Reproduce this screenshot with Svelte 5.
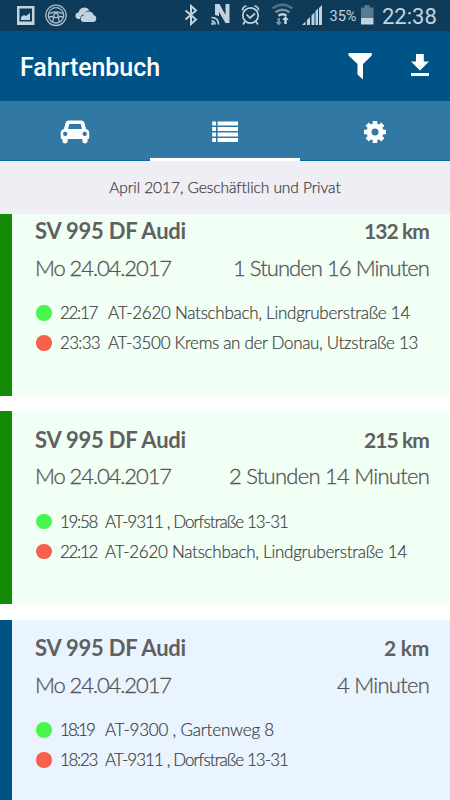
<script>
  const trips = [
    {
      kind: 'business', car: 'SV 995 DF Audi', carW: 151, km: '132 km', kmW: 65,
      date: 'Mo 24.04.2017', dateW: 136, time: '1 Stunden 16 Minuten', timeW: 196, column: 48,
      stops: [
        { at: '22:17', atW: 37, place: 'AT-2620 Natschbach, Lindgruberstraße 14', w: 302 },
        { at: '23:33', atW: 40, place: 'AT-3500 Krems an der Donau, Utzstraße 13', w: 310 }
      ]
    },
    {
      kind: 'business', car: 'SV 995 DF Audi', carW: 151, km: '215 km', kmW: 65,
      date: 'Mo 24.04.2017', dateW: 136, time: '2 Stunden 14 Minuten', timeW: 200, column: 45,
      stops: [
        { at: '19:58', atW: 37, place: 'AT-9311 , Dorfstraße 13-31', w: 183 },
        { at: '22:12', atW: 37, place: 'AT-2620 Natschbach, Lindgruberstraße 14', w: 302 }
      ]
    },
    {
      kind: 'private', car: 'SV 995 DF Audi', carW: 151, km: '2 km', kmW: 45,
      date: 'Mo 24.04.2017', dateW: 136, time: '4 Minuten', timeW: 92, column: 45,
      stops: [
        { at: '18:19', atW: 34, place: 'AT-9300 , Gartenweg 8', w: 169 },
        { at: '18:23', atW: 37, place: 'AT-9311 , Dorfstraße 13-31', w: 183 }
      ]
    }
  ];

  // Spreads the letter gaps evenly so that a label takes up the given width.
  function fit(node, width) {
    const gap = (width - node.getBoundingClientRect().width) / node.textContent.length;
    node.style.letterSpacing = `${gap}px`;
  }
</script>

<div class="screen">
  <header class="status">
    <svg width="450" height="31" viewBox="0 0 450 31" fill="#c3d3dd">
      <path fill-rule="evenodd" d="M17 6h17.500v19H17zM19.500 8.500v13h12.500v-13z" />
      <path d="M21 20v-3l3-2 2 1 4-3v7z" />
      <g fill="none" stroke="#a9bcc9" stroke-width="1.300">
        <circle cx="56" cy="15.300" r="10.200" /><circle cx="56" cy="15.300" r="7.700" />
        <circle cx="56" cy="15.500" r="2.200" />
        <path d="M48.500 14q7.500-4 15 0M48.500 17l5-.5M63.500 17l-5-.5M54 17l-1.500 5M58 17l1.500 5" />
      </g>
      <path d="M78 19a3.300 3.300 0 0 1 .5-6.500 6 6 0 0 1 11-2q-4 0-5 4-4 0-4.500 4.500z" />
      <path d="M83 22a3.400 3.400 0 0 1 .5-6.600 5.400 5.400 0 0 1 10.200-.5 3.700 3.700 0 0 1 0 7.100z" />
      <path d="M185.500 10.500l10.500 9-5 4.500V6l5 4.500-10.500 9" fill="none" stroke="#c3d3dd" stroke-width="2" />
      <path d="M215 15V4h4.500l6 11V4h4v19h-4l-6.500-11v4z" />
      <g fill="none" stroke="#c3d3dd" stroke-width="1.700">
        <path d="M211.500 17.500q7 0 7 7M211.500 21q3.500 0 3.500 3.500" />
        <circle cx="250.500" cy="15.500" r="7.700" />
        <path d="M246.500 14.500l3.500 3.500 5-4.500M242.500 10.500q0-4 4-4.500M258.500 10.500q0-4-4-4.500M245 21.500l-2 3M256 21.500l2 3" />
      </g>
      <circle cx="212.500" cy="23.700" r="1.300" />
      <g fill="none" stroke-width="2.400">
        <path d="M272.500 8.500q10-7.500 20 0" stroke="#4c7186" />
        <path d="M275.500 12.300q7-5 14 0" stroke="#7894a5" />
        <path d="M278.500 15.800q4-3 8 0" stroke="#c3d3dd" />
      </g>
      <path d="M284.200 24v-4h-2l3.300-4 3.300 4h-2v4z" />
      <path fill="#7894a5" d="M277.500 18h2.500v4h2l-3.200 3.500-3.300-3.500h2z" />
      <path d="M302 25l3.500-3.500V25zM307 20l3-3v8h-3zM311.500 15.500l3-3V25h-3zM315.500 11l2.500-2.500V25h-2.500zM319 8l3-3v20h-3z" />
      <path fill="#587b91" d="M361 7.500h3.500V5h5v2.500h4V18H361z" />
      <path d="M361 18h12.500v6.500H361z" />
    </svg>
    <span class="percent">35%</span>
    <span class="clock">22:38</span>
  </header>

  <div class="bar">
    <h1 use:fit={140}>Fahrtenbuch</h1>
    <div class="actions">
      <svg width="26" height="28" viewBox="0 0 26 28" fill="#fff"><path d="M1.500 1H24.800V3.500L16 12v15.500l-5.500-5V12L1.500 3.500z" /></svg>
      <svg width="20" height="28" viewBox="0 0 20 28" fill="#fff"><path d="M6 2h7.800v7.500H19L10 18.500 1 9.500h5zM1 21h18v3H1z" /></svg>
    </div>
  </div>

  <nav>
    <button aria-label="Auto">
      <svg width="30" height="24" viewBox="0 0 30 24" fill="#fff">
        <path fill-rule="evenodd" d="M8.500.5h13q2.500 0 3 2.500L26 9q3 .5 3.200 3.700V18q0 1-1 1h-.6v2.200a2.700 2.700 0 0 1-5.300 0V19H7.700v2.200a2.700 2.700 0 0 1-5.300 0V19h-.7q-1 0-1-1v-5.300Q.9 9.500 3.900 9L5.500 3Q6 .5 8.500.5zM9.300 4L8 9h14l-1.300-5zM5.200 11.700a2.200 2.200 0 1 0 .01 0zm19.500 0a2.200 2.200 0 1 0 .01 0z" />
      </svg>
    </button>
    <button class="active" aria-label="Liste">
      <svg width="28" height="22" viewBox="0 0 28 22" fill="#fff">
        <path d="M1.200.5h3.800v4H1.200zM6.600.5H27v4H6.600zM1.200 6h3.800v4H1.200zM6.600 6H27v4H6.600zM1.200 11.500h3.800v4H1.200zM6.600 11.500H27v4H6.600zM1.200 17h3.800v4H1.200zM6.600 17H27v4H6.600z" />
      </svg>
    </button>
    <button aria-label="Einstellungen">
      <svg width="24" height="24" viewBox="0 0 24 24" fill="#fff">
        <path d="M12 4.800V1M12 23v-3.800M4.800 12H1M23 12h-3.800M6.900 6.900L4.200 4.200M19.800 19.800l-2.700-2.700M6.900 17.100l-2.700 2.700M19.800 4.200l-2.700 2.700" stroke="#fff" stroke-width="4.600" />
        <circle cx="12" cy="12" r="6" fill="none" stroke="#fff" stroke-width="5" />
      </svg>
    </button>
  </nav>

  <div class="summary"><span use:fit={231}>April 2017, Geschäftlich und Privat</span></div>

  <main>
    {#each trips as trip}
      <article class={trip.kind}>
        <div class="line strong"><span use:fit={trip.carW}>{trip.car}</span><span class="km" use:fit={trip.kmW}>{trip.km}</span></div>
        <div class="line"><span use:fit={trip.dateW}>{trip.date}</span><span use:fit={trip.timeW}>{trip.time}</span></div>
        <ul>
          {#each trip.stops as stop, i}
            <li>
              <i class:end={i === 1}></i>
              <div class="at" style:width="{trip.column}px"><span use:fit={stop.atW}>{stop.at}</span></div>
              <span use:fit={stop.w}>{stop.place}</span>
            </li>
          {/each}
        </ul>
      </article>
    {/each}
  </main>
</div>

<style>
  :global(body) { margin: 0; }
  .screen {
    width: 450px; height: 800px; overflow: hidden; display: flex; flex-direction: column;
    background: #fff; font-family: Lato, 'Open Sans', sans-serif; color: #555;
  }
  .screen > * { flex: none; box-sizing: border-box; }
  span { white-space: pre; }
  .status { position: relative; height: 31px; background: #0d3b59; color: #c3d3dd; font-family: Roboto, sans-serif; }
  .status svg { display: block; }
  .percent, .clock { position: absolute; line-height: 31px; top: 1px; }
  .percent { left: 329.500px; font-size: 14.500px; }
  .clock { left: 382px; font-size: 22px; }
  .bar {
    height: 70px; background: #005387; display: flex; align-items: center;
    justify-content: space-between; padding: 0 20px;
  }
  h1 { margin: 3px 0 0; font: 500 25px/30px Roboto, sans-serif; color: #fff; white-space: pre; }
  .actions { display: flex; gap: 37px; }
  .actions svg { display: block; }
  nav { height: 60px; background: #3278a5; display: flex; border-bottom: 1px solid #046ca3; }
  button {
    flex: 1; border: 0; padding: 2px 0 0; background: none; display: flex;
    align-items: center; justify-content: center;
  }
  .active { border-bottom: 3px solid #fff; margin-bottom: -1px; }
  .active svg { margin-top: 2px; }
  .summary {
    height: 53px; background: #efeef4; text-align: center; font-size: 15.500px; line-height: 53px;
    font-weight: 300; color: #444; -webkit-text-stroke: 0.25px #444;
  }
  main { flex: 1 0 0; overflow: hidden; display: flex; flex-direction: column; gap: 15.500px; }
  article {
    flex: none; box-sizing: border-box; height: 193px; padding: 10.500px 21px 0 23px;
    border-left: 12px solid #148b06; background: #f1fff5;
  }
  article:first-child { margin-top: -11.500px; }
  .private { border-color: #005387; background: #e9f4ff; }
  .line {
    display: flex; justify-content: space-between; font-size: 22px; line-height: 36.500px;
    font-weight: 300; -webkit-text-stroke: 0.3px #555;
  }
  .strong { font-weight: 700; color: #606060; -webkit-text-stroke: 0; }
  .km { font-size: 21px; }
  ul { list-style: none; margin: 12px 0 0; padding: 0; }
  li {
    display: flex; align-items: center; height: 30px; font-size: 17px; line-height: 30px;
    font-weight: 300; color: #3c3c3c; -webkit-text-stroke: 0.2px #3c3c3c;
  }
  i { width: 15.500px; height: 15.500px; margin: 0 8.500px 0 1px; border-radius: 50%; background: #49f64c; }
  .end { background: #f9604b; }
</style>
